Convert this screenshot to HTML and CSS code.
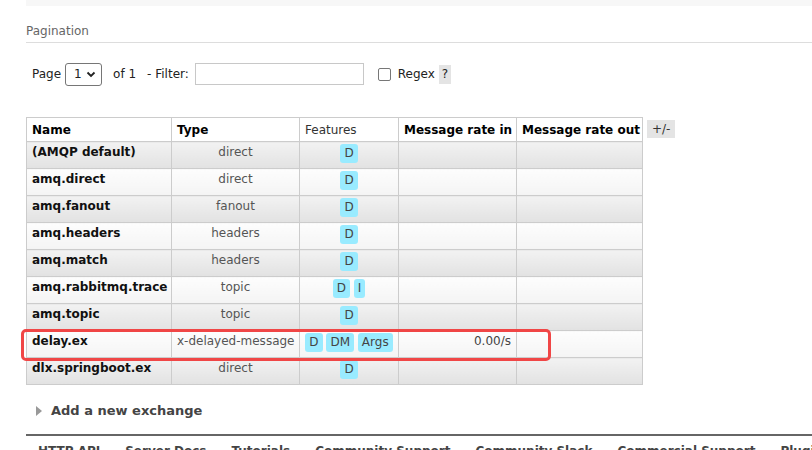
FILE: index.html
```html
<!DOCTYPE html>
<html>
<head>
<meta charset="utf-8">
<link rel="stylesheet" href="styles.css">
</head>
<body>
<div class="page">
  <div class="topband"></div>
  <h3 class="section">Pagination</h3>
  <div class="pager">
    <span class="lbl">Page</span>
    <span class="select">1 <svg width="10" height="7" viewBox="0 0 10 7"><path d="M1.5 1.5 L5 5 L8.5 1.5" fill="none" stroke="#222" stroke-width="1.8"/></svg></span>
    <span class="of">of 1</span>
    <span class="flt">- Filter:</span>
    <span class="input"></span>
    <span class="check"></span>
    <span class="regex">Regex</span>
    <span class="help">?</span>
  </div>
  <div class="tablewrap">
    <table class="list">
      <colgroup><col class="c1"><col class="c2"><col class="c3"><col class="c4"><col class="c5"></colgroup>
      <thead>
        <tr><th>Name</th><th>Type</th><th class="plain">Features</th><th>Message rate in</th><th>Message rate out</th></tr>
      </thead>
      <tbody>
        <tr class="alt1"><td class="name">(AMQP default)</td><td class="type">direct</td><td class="feat"><span class="b">D</span></td><td></td><td></td></tr>
        <tr class="alt2"><td class="name">amq.direct</td><td class="type">direct</td><td class="feat"><span class="b">D</span></td><td></td><td></td></tr>
        <tr class="alt1"><td class="name">amq.fanout</td><td class="type">fanout</td><td class="feat"><span class="b">D</span></td><td></td><td></td></tr>
        <tr class="alt2"><td class="name">amq.headers</td><td class="type">headers</td><td class="feat"><span class="b">D</span></td><td></td><td></td></tr>
        <tr class="alt1"><td class="name">amq.match</td><td class="type">headers</td><td class="feat"><span class="b">D</span></td><td></td><td></td></tr>
        <tr class="alt2"><td class="name">amq.rabbitmq.trace</td><td class="type">topic</td><td class="feat"><span class="b">D</span> <span class="b">I</span></td><td></td><td></td></tr>
        <tr class="alt1"><td class="name">amq.topic</td><td class="type">topic</td><td class="feat"><span class="b">D</span></td><td></td><td></td></tr>
        <tr class="alt2"><td class="name">delay.ex</td><td class="type">x-delayed-message</td><td class="feat"><span class="b">D</span> <span class="b">DM</span> <span class="b">Args</span></td><td class="rate">0.00/s</td><td></td></tr>
        <tr class="alt1"><td class="name">dlx.springboot.ex</td><td class="type">direct</td><td class="feat"><span class="b">D</span></td><td></td><td></td></tr>
      </tbody>
    </table>
    <span class="plusminus">+/-</span>
    <div class="highlight"></div>
  </div>
  <div class="addnew"><span class="tri"></span>Add a new exchange</div>
  <div class="footer">
    <a>HTTP API</a><a>Server Docs</a><a>Tutorials</a><a>Community Support</a><a>Community Slack</a><a>Commercial Support</a><a>Plugins</a>
  </div>
</div>
</body>
</html>
```
FILE: styles.css
```css
html, body { margin: 0; padding: 0; background: #fff; }
body { font-family: "DejaVu Sans", Verdana, sans-serif; font-size: 12px; color: #484848; overflow: hidden; height: 450px; }
.page { padding-left: 26px; }
.topband { height: 6px; background: #f7f7f7; }
.section { margin: 18px 0 0 0; font-size: 12px; font-weight: normal; color: #666; padding-bottom: 3px; border-bottom: 1px solid #ddd; line-height: 15px; }
.pager { display: flex; align-items: center; height: 24px; margin-top: 19px; padding-left: 6px; color: #222; }
.lbl { margin-right: 4px; }
.select { box-sizing: border-box; width: 37px; height: 23px; border: 1px solid #767676; border-radius: 3px; display: flex; align-items: center; justify-content: space-between; padding: 0 5px 0 8px; color: #222; }
.of { margin-left: 11px; }
.flt { margin-left: 11px; }
.input { box-sizing: border-box; width: 169px; height: 22px; border: 1px solid #c8c8c8; margin-left: 6px; }
.check { box-sizing: border-box; width: 13px; height: 13px; border: 1px solid #777; border-radius: 2px; margin-left: 14px; }
.regex { margin-left: 7px; }
.help { background: #e4e4e4; padding: 2px 3px; margin-left: 4px; line-height: 15px; }
.tablewrap { position: relative; margin-top: 31px; display: flex; align-items: flex-start; }
table.list { border-collapse: collapse; border: 1px solid #ccc; table-layout: fixed; width: 616px; }
col.c1 { width: 145px; }
col.c2 { width: 128px; }
col.c3 { width: 99px; }
col.c4 { width: 118px; }
col.c5 { width: 126px; }
table.list th, table.list td { border: 1px solid #ccc; white-space: nowrap; overflow: hidden; }
table.list th { text-align: left; font-weight: bold; color: #000; height: 23px; background: #fff; padding: 0 5px; }
table.list th.plain { font-weight: normal; color: #333; }
table.list td { vertical-align: top; padding: 3px 5px 0; height: 23px; box-sizing: content-box; }
td.name { font-weight: bold; color: #111; }
td.type { text-align: center; color: #555; }
table.list td.feat { text-align: center; padding: 1px 2px 0; height: 25px; }
td.rate { text-align: right; color: #444; }
tr.alt1 td { background: linear-gradient(#f2f2f2, #e2e2e2); }
tr.alt2 td { background: linear-gradient(#fdfdfd, #f4f4f4); }
.b { display: inline-block; background: #99ebff; color: #444; border-radius: 3px; padding: 2px 4px; line-height: 15px; margin-top: 1px; }
.plusminus { background: #e4e4e4; color: #333; padding: 2px 5px; margin-left: 4px; margin-top: 3px; line-height: 14px; }
.highlight { position: absolute; left: -5px; top: 212px; width: 524px; height: 26px; border: 3px solid #f04646; border-radius: 5px; }
.addnew { margin-top: 18px; font-weight: bold; font-size: 13px; color: #444; display: flex; align-items: center; padding-left: 10px; }
.tri { width: 0; height: 0; border-top: 5px solid transparent; border-bottom: 5px solid transparent; border-left: 6px solid #999; margin-right: 9px; }
.footer { margin-top: 16px; border-top: 2px solid #666; padding-top: 8px; padding-left: 12px; display: flex; font-weight: bold; color: #444; white-space: nowrap; }
.footer a { margin-right: 25px; }
```
